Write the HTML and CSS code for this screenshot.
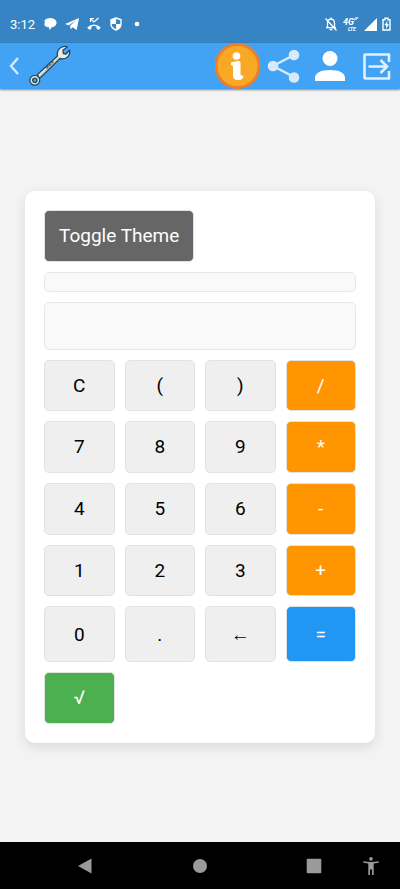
FILE: index.html
```html
<!DOCTYPE html>
<html lang="en">
<head>
<meta charset="utf-8">
<meta name="viewport" content="width=device-width, initial-scale=1">
<title>Calculator</title>
<link rel="stylesheet" href="styles.css">
</head>
<body>
<div class="status">
  <span class="time">3:12</span>
  <div class="status-left">
    <svg width="14" height="14" viewBox="0 0 14 14" fill="#fff"><path d="M4.500 1.500Q8 .3 11 2q3 1.500 2.500 4.500-.5 3-4.500 3.700L6.500 13 6 10.300Q2.500 10.500 1.500 8 1 6.500 2 5.800.2 2.800 4.500 1.500z"/></svg>
    <svg width="14" height="14" viewBox="0 0 14 14" fill="#fff"><path d="M0 7 14 1l-2.300 12-4-2.700-2 2-.7-3.600 6-5.200-7.300 4.800z"/></svg>
    <svg width="14" height="14" viewBox="0 0 14 14"><path d="M.2 10.500Q7 4.500 13.800 10.500L11.500 13 9.500 11.500V9.300Q7 8.500 4.500 9.300v2.200l-2 1.500z" fill="#fff"/><path d="M3.500 5V1.500H7M3.500 1.500 7 5l4.500-4" fill="none" stroke="#fff" stroke-width="1.200"/></svg>
    <svg width="14" height="14" viewBox="0 0 14 14"><path d="M7 1 12 2.800V7q0 4-5 6-5-2-5-6V2.800z" fill="none" stroke="#fff" stroke-width="1.400"/><path d="M7 1v6H2V2.800zM7 7h5q0 4-5 6z" fill="#fff"/></svg>
    <svg width="14" height="14" viewBox="0 0 14 14"><circle cx="6" cy="7" r="2.300" fill="#fff"/></svg>
  </div>
  <div class="status-right">
    <svg width="14" height="14" viewBox="0 0 14 14" fill="none" stroke="#fff" stroke-width="1.300"><path d="M3.500 10.500V6q0-3.500 3.500-4 3.500.5 3.500 4v4.500M2 10.700h10M7 .5V2M1.500 1.500l11 12"/><path d="M5.500 12.500h3" stroke-width="1.600"/></svg>
    <svg class="network" width="16" height="16" viewBox="0 0 16 16" fill="#fff"><text x="0" y="9" font-size="9">4G</text><text x="5" y="15" font-size="5">LTE</text><path d="M11.500 4.500 12 2l1.500-.5L13 4M14 3l1-2" fill="none" stroke="#fff" stroke-width=".8"/></svg>
    <svg width="13" height="13" viewBox="0 0 13 13"><path d="M13 0v13H0z" fill="#fff"/></svg>
    <svg width="9" height="14" viewBox="0 0 9 14"><path d="M3 1.200h3V2.800h2v10.200H1V2.800h2z" fill="none" stroke="#fff" stroke-width="1.400"/><path d="M5.300 4 2.300 8.300h1.900V12l2.700-4.800H5.300z" fill="#fff"/></svg>
  </div>
</div>
<header class="appbar">
  <button class="back" aria-label="Back"><svg width="12" height="20" viewBox="0 0 12 20"><path d="M9 2 2 10l7 8" fill="none" stroke="#d6eafc" stroke-width="2.400"/></svg></button>
  <svg class="wrench" width="42" height="42" viewBox="0 0 42 42">
    <g fill="#ebebe7" stroke="#244a5e" stroke-width="1.300" stroke-linejoin="round">
      <path d="M8.500 29.500 28.500 11Q27.500 5 32 2.500q4-2 6.500-.5l-4.500 3 .3 3.500 2.700.5 3.500-4q1 5-2.500 7.500-3 2-7 1L10.500 33.500z"/>
      <circle cx="5.800" cy="35.300" r="4.900"/><circle cx="5.800" cy="35.300" r="2.200" fill="#42a3f5"/>
    </g>
    <path d="M17.500 23.500l7-7" stroke="#59666b" stroke-width="2" stroke-dasharray="3 .6"/><path d="M11 31 30 12.500" stroke="#a9b1b2" stroke-width=".8"/>
  </svg>
  <nav class="actions">
    <button aria-label="Information"><svg width="46" height="46" viewBox="0 0 46 46"><circle cx="22.500" cy="23" r="21.500" fill="#f9a826" stroke="#ec7f2d" stroke-width="2.800"/><circle cx="21.500" cy="13" r="3.800" fill="#fff"/><path d="M16 19.500q4-1.700 8-1.500 1.500 0 1.500 2V31q0 2.500 3 1.500 0 4.500-5.500 4.500-5 0-5-4.500V24q0-1.500-2-2z" fill="#fff"/></svg></button>
    <button aria-label="Share"><svg width="46" height="46" viewBox="0 0 46 46"><path d="M34 11.500 12 23l22 11.500" fill="none" stroke="#d7eafc" stroke-width="2.500"/><g fill="#d7eafc"><circle cx="33" cy="12" r="5.300"/><circle cx="12" cy="23" r="5.300"/><circle cx="33" cy="34.500" r="5.300"/></g></svg></button>
    <button aria-label="Profile"><svg width="46" height="46" viewBox="0 0 46 46" fill="#fff"><circle cx="23" cy="15.500" r="7.500"/><path d="M8 38v-3.500Q9 27 23 27t15 7.500V38z"/></svg></button>
    <button aria-label="Exit"><svg width="46" height="46" viewBox="0 0 46 46" fill="none" stroke="#e3effb" stroke-width="2.600"><path d="M36 19v-7.500H12.500q-1 0-1 1v22q0 1 1 1H36V28" stroke-linejoin="round"/><path d="M15.500 23.500h18M27.500 17l6.500 6.500-6.500 6.500"/></svg></button>
  </nav>
</header>
<main>
  <section class="card">
    <button class="btn toggle">Toggle Theme</button>
    <input class="field history" aria-label="History" readonly>
    <input class="field display" aria-label="Display" readonly>
    <div class="keys">
      <button class="btn">C</button><button class="btn">(</button><button class="btn">)</button><button class="btn op">/</button>
      <button class="btn">7</button><button class="btn">8</button><button class="btn">9</button><button class="btn op">*</button>
      <button class="btn">4</button><button class="btn">5</button><button class="btn">6</button><button class="btn op">-</button>
      <button class="btn">1</button><button class="btn">2</button><button class="btn">3</button><button class="btn op">+</button>
      <button class="btn">0</button><button class="btn">.</button><button class="btn">←</button><button class="btn equals">=</button>
      <button class="btn root">√</button>
    </div>
  </section>
</main>
<footer class="navbar">
  <button aria-label="Back"><svg width="16" height="16" viewBox="0 0 16 16"><path d="M14.500.5v15L1 8z"/></svg></button>
  <button aria-label="Home"><svg width="16" height="16" viewBox="0 0 16 16"><circle cx="8" cy="8" r="7"/></svg></button>
  <button aria-label="Recent apps"><svg width="16" height="16" viewBox="0 0 16 16"><rect x=".7" y=".7" width="14.600" height="14.600" rx="1"/></svg></button>
  <button aria-label="Accessibility"><svg width="16" height="18" viewBox="0 0 16 18"><circle cx="8" cy="1.900" r="1.800"/><path d="M.3 4.200Q8 5.800 15.700 4.200v1.600l-5 .7V18H9v-5.500H7V18H5.300V6.500l-5-.7z"/></svg></button>
</footer>
</body>
</html>
```
FILE: styles.css
```css
* { box-sizing: border-box; }
body {
  margin: 0;
  min-height: 100vh;
  display: flex;
  flex-direction: column;
  background: #f3f3f3;
  font-family: Roboto, sans-serif;
}
button { border: 0; padding: 0; background: none; font: inherit; cursor: pointer; }
svg { display: block; }
.status {
  height: 43px;
  padding: 5px 9px 0 10px;
  display: flex;
  align-items: center;
  background: #3684c4;
  color: #fff;
}
.time { width: 33px; font: 13px Roboto, sans-serif; }
.status-left { display: flex; gap: 8px; }
.status-right { margin-left: auto; display: flex; align-items: center; gap: 5px; }
.network { font-family: Roboto, sans-serif; font-weight: 700; font-style: italic; }
.appbar {
  height: 46px;
  padding-right: 1px;
  display: flex;
  align-items: center;
  background: #42a3f5;
  box-shadow: 0 1px 2px rgba(0, 0, 0, .45);
}
.back { width: 29px; display: flex; justify-content: center; }
.actions { margin-left: auto; display: flex; }
main { flex: 1; display: flex; align-items: center; padding: 26px 25px 24px; }
.card {
  flex: 1;
  padding: 19px;
  display: flex;
  flex-direction: column;
  gap: 10px;
  background: #fff;
  border-radius: 10px;
  box-shadow: 0 4px 12px rgba(0, 0, 0, .1);
}
.btn {
  min-height: 51px;
  border: 1px solid #e2e2e2;
  border-radius: 5px;
  background: #efefef;
  color: #000;
  font-size: 19px;
}
.toggle {
  align-self: flex-start;
  height: 52px;
  padding: 0 14px;
  background: #666;
  color: #fff;
}
.field {
  width: 100%;
  padding: 0 10px;
  border: 1px solid #e8e8e8;
  border-radius: 5px;
  background: #f9f9f9;
  font: 19px Roboto, sans-serif;
}
.history { height: 20px; }
.display { height: 48px; }
.keys {
  min-height: 364px;
  display: grid;
  grid-template-columns: repeat(4, 1fr);
  grid-template-rows: repeat(4, 13fr) 14fr 13fr;
  gap: 10px;
}
.op { background: #ff9500; color: #fff; }
.equals { background: #2196f3; color: #fff; }
.root { background: #4caf50; color: #fff; }
.navbar {
  height: 47px;
  padding: 0 20px 0 36px;
  display: grid;
  grid-template-columns: 98fr 132fr 96fr 18px;
  align-items: center;
  background: #000;
  fill: #9a9a9a;
}
.navbar button { display: flex; justify-content: center; }
```
